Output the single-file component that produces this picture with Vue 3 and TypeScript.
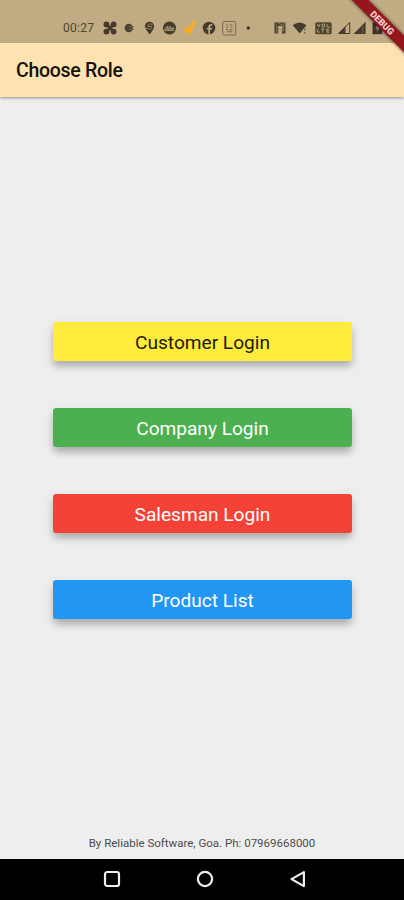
<script setup lang="ts">
interface RoleOption {
  label: string
  tone: string
}

const roles: RoleOption[] = [
  { label: 'Customer Login', tone: 'yellow' },
  { label: 'Company Login', tone: 'green' },
  { label: 'Salesman Login', tone: 'red' },
  { label: 'Product List', tone: 'blue' },
]
</script>

<template>
  <div class="screen">
    <header class="status">
      <span class="time">00:27</span>
      <div class="notifications">
        <svg viewBox="0 0 20 20"><g fill="#443b2d"><circle cx="6.4" cy="6.4" r="2.9" /><circle cx="13.6" cy="6.4" r="2.9" /><circle cx="6.4" cy="13.6" r="2.9" /><circle cx="13.6" cy="13.6" r="2.9" /></g><path d="M6 6l8 8M14 6l-8 8" stroke="#443b2d" stroke-width="2.8" /></svg>
        <svg viewBox="0 0 20 20"><circle cx="8.8" cy="10" r="4.2" fill="#4b4232" /><path d="M9 8.7h5M9 11.3h5" stroke="#75684d" stroke-width="1" /></svg>
        <svg viewBox="0 0 20 20"><path d="M9.6 16.5C8 13.8 4.9 11 4.9 8.3a4.6 4.6 0 0 1 9.2 0C14.1 11 11.6 13.8 9.6 16.5Z" fill="#443b2d" /><path d="M12.5 6.5C9.2 5 7.2 7 8.2 8.5h3.3c1 1.5-.6 3-2.3 3M5 10.3h3.7" fill="none" stroke="#9a8966" stroke-width="1" /></svg>
        <svg viewBox="0 0 20 20"><circle cx="9.5" cy="10" r="6.5" fill="#443b2d" /><path d="M4.5 11.8l3.2-3.2.2 3 2.5-3 .5 2.8 2.3-1.7.8 2M4.5 12.4h9.5" fill="none" stroke="#a4936f" stroke-width="1.1" /></svg>
        <svg viewBox="0 0 20 20"><path d="M3 10.2q2-1.8 3.6 0l1.2 1.3L12.5 4q1.4-1.8 3.2-.5L10.8 14.8q-1.7 2.8-4.4.3Z" fill="#ffab16" /></svg>
        <svg viewBox="0 0 20 20"><circle cx="9" cy="10" r="6.3" fill="#443b2d" /><path d="M9.2 16.5V9q0-2.5 3-2.2M6.9 10.6h5" fill="none" stroke="#c0ab80" stroke-width="1.7" /></svg>
        <svg viewBox="0 0 20 20"><rect x="2.7" y="3.5" width="13" height="13.5" rx="1.5" fill="none" stroke="#776a50" stroke-width="1" /><path d="M6 7h2M9.5 7h3M6.5 9.3h2M10.5 9.3h2M6 11.6h2M9.5 11.6h3M7 13.8h5" stroke="#776a50" stroke-width="1.1" /></svg>
        <svg viewBox="0 0 20 20"><circle cx="8.3" cy="10" r="1.8" fill="#443b2d" /></svg>
      </div>
      <div class="system">
        <svg width="20" height="20" viewBox="0 0 20 20"><path d="M4.5 15.5v-11h11v11H12V8H8.2v7.5Z" fill="#4b4232" /><path d="M6.7 6.8v8.7M8.3 5.2l4 2v6l-3-2.5M13.7 4.5v8.7" fill="none" stroke="#9a8966" stroke-width=".8" /></svg>
        <svg width="20" height="20" viewBox="0 0 20 20"><path d="M2.7 7.2Q9.5 1.8 16.5 7.2L9.7 15.5Z" fill="#443b2d" /><path d="M14.7 10.5v2M14.7 14v1.4" stroke="#625640" stroke-width="1.1" /></svg>
        <svg width="27" height="20" viewBox="0 0 27 20"><rect x="5.2" y="4.3" width="16.5" height="12" rx="1.5" fill="#50462f" /><path d="M7.3 6l1.5 3 1.3-3M12.2 6h2.3v3h-2.3zM17 6v3h3M7.3 11v3h2.5M11 11h3.5M12.7 11v3.5M19.5 11h-2.7v3.2h2.7M17 12.5h2" fill="none" stroke="#b5a47d" stroke-width=".9" /></svg>
        <svg width="16" height="20" viewBox="0 0 16 20"><path d="M1.5 15.5 12.7 4.5v11Z" fill="none" stroke="#443b2d" stroke-width="1" /><path d="M.9 15.9 8.5 8.6v7.3Z" fill="#443b2d" /></svg>
        <svg width="16" height="20" viewBox="0 0 16 20"><path d="M.5 15.9 12.6 3.7v12.2Z" fill="#443b2d" /><path d="M9.8 8v7" stroke="#817353" stroke-width=".8" /></svg>
        <svg width="20" height="20" viewBox="0 0 20 20"><path d="M3.5 4.5h9.7v11.7H3.5Z" fill="#3c3427" /><path d="m9.2 6-3 4.7h2.2l-.8 3.6 3.2-4.8H8.6Z" fill="#a59269" /></svg>
      </div>
      <svg class="ribbon" viewBox="0 0 64 56">
        <defs>
          <filter id="ribbonShade" x="-20%" y="-20%" width="140%" height="140%"><feGaussianBlur stdDeviation="1.8" /></filter>
        </defs>
        <path d="M10-10 80 60" stroke="#000" stroke-opacity=".5" stroke-width="13" filter="url(#ribbonShade)" />
        <path d="M10-10 80 60" stroke="#97151d" stroke-width="11.6" />
        <text transform="translate(42.2 22.8) rotate(45)" text-anchor="middle" y="3.2">DEBUG</text>
      </svg>
    </header>

    <div class="appbar"><h1>Choose Role</h1></div>

    <main>
      <button v-for="role in roles" :key="role.label" type="button" :class="['role', role.tone]">{{ role.label }}</button>
    </main>

    <footer>By Reliable Software, Goa. Ph: 07969668000</footer>

    <nav>
      <svg viewBox="0 0 24 24"><rect x="5" y="5" width="14" height="14" rx="2.3" /></svg>
      <svg viewBox="0 0 24 24"><circle cx="12" cy="12" r="7.1" /></svg>
      <svg viewBox="0 0 24 24"><path d="M17.9 5.1v14L5.5 12.1Z" /></svg>
    </nav>
  </div>
</template>

<style>
body {
  margin: 0;
  background: #eee;
}
</style>

<style scoped>
.screen {
  width: 404px;
  height: 900px;
  display: flex;
  flex-direction: column;
  overflow: hidden;
  background: #eee;
  font-family: Roboto, 'Liberation Sans', sans-serif;
}
.status {
  position: relative;
  z-index: 2;
  height: 42.5px;
  flex: none;
  display: flex;
  align-items: center;
  box-sizing: border-box;
  padding: 14px 0 0 63px;
  background: #c0ab83;
}
.time {
  width: 37px;
  font-size: 12px;
  letter-spacing: 0.3px;
  color: #51462f;
}
.notifications,
.system {
  display: flex;
}
.notifications svg {
  width: 20px;
  height: 20px;
  flex: none;
}
.system {
  margin-left: 10px;
}
.system svg {
  flex: none;
}
.ribbon {
  position: absolute;
  top: 0;
  right: 0;
  width: 64px;
  height: 56px;
}
.ribbon text {
  font-size: 9.2px;
  font-weight: 900;
  fill: #f0cfcd;
}
.appbar {
  position: relative;
  z-index: 1;
  height: 54px;
  flex: none;
  display: flex;
  align-items: center;
  padding: 0 16px;
  background: #ffe2b2;
  box-shadow: 0 1px 3px rgba(0, 0, 0, 0.4);
}
h1 {
  margin: 0;
  padding-top: 1px;
  font-size: 19.5px;
  letter-spacing: -0.28px;
  font-weight: 500;
  color: #16130e;
}
main {
  flex: 1;
  display: flex;
  flex-direction: column;
  align-items: center;
  justify-content: center;
  gap: 47.5px;
  padding: 19px 52px 0 53px;
}
.role {
  width: 100%;
  height: 38.7px;
  flex: none;
  border: 0;
  border-radius: 3px;
  padding: 2px 0 0;
  font: 400 19.1px Roboto, 'Liberation Sans', sans-serif;
  color: #fff;
  box-shadow: 0 6px 7px -1px rgba(0, 0, 0, 0.2), 0 4px 11px rgba(0, 0, 0, 0.12);
}
.yellow {
  background: #ffeb3b;
  color: #1c1a08;
}
.green {
  background: #4caf50;
}
.red {
  background: #f44336;
}
.blue {
  background: #2196f3;
}
footer {
  height: 33px;
  flex: none;
  line-height: 34px;
  text-align: center;
  font-size: 11.5px;
  color: #4c4c4c;
}
nav {
  height: 41.5px;
  flex: none;
  display: flex;
  justify-content: center;
  align-items: center;
  gap: 69px;
  box-sizing: border-box;
  padding-left: 6px;
  background: #000;
}
nav svg {
  width: 24px;
  height: 24px;
  fill: none;
  stroke: #eee;
  stroke-width: 2.2;
  stroke-linejoin: round;
}
</style>
